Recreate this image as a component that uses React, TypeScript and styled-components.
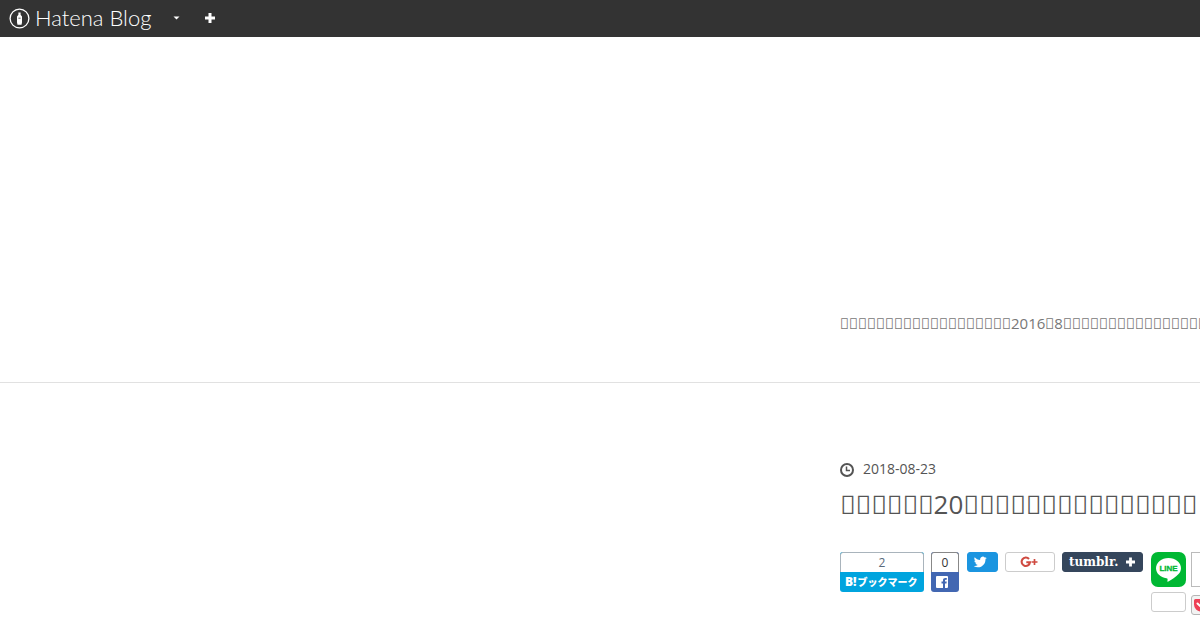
import React from "react";
import styled, { createGlobalStyle } from "styled-components";

const GlobalStyle = createGlobalStyle`
  * { box-sizing: border-box; }
  body {
    margin: 0;
    overflow-x: hidden;
    background: #fff;
    color: #545454;
    font-family: "Open Sans", "Noto Sans CJK JP", sans-serif;
  }
  a { color: inherit; text-decoration: none; }
`;

const Glyphs = styled.span`
  font-family: "Noto Sans", sans-serif;
`;

const Boxes = ({ count }: { count: number }) => <Glyphs>{"\uE123".repeat(count)}</Glyphs>;

const TopBar = styled.nav`
  display: flex;
  align-items: flex-start;
  height: 37px;
  padding-left: 9px;
  background: #333;
  color: #fff;
`;

const Brand = styled.a`
  display: flex;
  align-items: center;
  gap: 5px;
  width: 163px;
  font: 300 22px/36px Lato, sans-serif;
  white-space: nowrap;
`;

const BarButton = styled.button<{ $width: number }>`
  display: flex;
  align-items: center;
  width: ${(p) => p.$width}px;
  height: 36px;
  padding: 0;
  border: 0;
  background: none;
  color: #fff;
`;

const BlogHeader = styled.header`
  height: 346px;
  padding: 275px 0 0 70%;
  border-bottom: 1px solid #e1e1e1;
  overflow: hidden;
`;

const Description = styled.p`
  margin: 0;
  color: #777;
  font-size: 15px;
  line-height: 22px;
  white-space: nowrap;
`;

const Entry = styled.article`
  padding: 76px 0 0 70%;
  overflow: hidden;
`;

const EntryDate = styled.a`
  display: flex;
  align-items: center;
  gap: 9px;
  font-size: 14px;
  line-height: 20px;
  svg { margin-top: 2px; }
`;

const Title = styled.h1`
  margin: 7px 0 0;
  font-size: 26px;
  font-weight: 400;
  line-height: 36px;
  white-space: nowrap;
`;

const ShareRow = styled.div`
  display: flex;
  align-items: flex-start;
  gap: 8px;
  margin-top: 30px;
  padding-bottom: 15px;
`;

const ShareGroup = styled.div`
  display: flex;
  flex: none;
  gap: 7px;
`;

const Counter = styled.a<{ $width: number; $color: string }>`
  flex: none;
  width: ${(p) => p.$width}px;
  border-radius: 3px;
  overflow: hidden;
  background: ${(p) => p.$color};
  color: #fff;
`;

const Count = styled.span<{ $edge: string; $ink: string }>`
  display: block;
  height: 20px;
  border: 1px solid ${(p) => p.$edge};
  border-bottom: 0;
  border-radius: 3px 3px 0 0;
  background: #fff;
  color: ${(p) => p.$ink};
  font-size: 12px;
  line-height: 20px;
  text-align: center;
`;

const CounterLabel = styled.span`
  display: flex;
  align-items: center;
  gap: 1px;
  height: 20px;
  padding-left: 5px;
  font: 900 10px/20px "Noto Sans CJK JP", sans-serif;
  white-space: nowrap;

  b { font: 800 12px/20px "Open Sans", sans-serif; }
`;

const Pill = styled.a<{ $width: number; $color: string; $edge?: string }>`
  display: flex;
  flex: none;
  align-items: center;
  justify-content: center;
  width: ${(p) => p.$width}px;
  height: 20px;
  border: 1px solid ${(p) => p.$edge ?? p.$color};
  border-radius: 3px;
  background: ${(p) => p.$color};
  color: #fff;
`;

const TumblrName = styled.span`
  flex: 1;
  padding-left: 6px;
  font: 700 12px/18px "DejaVu Serif", serif;
  white-space: nowrap;
`;

const Stack = styled.div`
  display: flex;
  flex: none;
  flex-direction: column;
  gap: 5px;
`;

const ShareTail = styled.div`
  display: flex;
  gap: 5px;
`;

const LineButton = styled.a`
  display: block;
  height: 35px;
`;

const EmptyFrame = styled.div`
  width: 60px;
  height: 35px;
  border: 1px solid #bbb;
`;

const Pocket = styled.a`
  display: flex;
  align-items: center;
  width: 60px;
  height: 20px;
  margin-top: 3px;
  padding-left: 2px;
  border: 1px solid #b5b5b5;
  border-radius: 3px;
  background: #f3f3f3;
`;

export default function App() {
  return (
    <>
      <GlobalStyle />
      <TopBar>
        <Brand href="#">
          <svg width="21" height="21" viewBox="0 0 21 21" aria-hidden="true">
            <circle cx="10.5" cy="10.5" r="9.4" fill="none" stroke="#fff" strokeWidth="1.3" />
            <path d="M9.4 4.500h2.200v2.300L13 8.500v6l-.5 2.200H8.500L8 14.500v-6l1.400-1.700z" fill="#fff" />
            <path d="M9.400 10.200h2.200" stroke="#333" strokeWidth=".8" />
          </svg>
          Hatena Blog
        </Brand>
        <BarButton $width={33} aria-label="Menu">
          <svg width="8" height="6" viewBox="0 0 8 6"><path d="M1.500 1.500h6l-3 3z" fill="#fff" /></svg>
        </BarButton>
        <BarButton $width={12} aria-label="New post">
          <svg width="10" height="10" viewBox="0 0 10 10"><path d="M5 0v10M0 5h10" stroke="#fff" strokeWidth="3" /></svg>
        </BarButton>
      </TopBar>

      <BlogHeader>
        <Description><Boxes count={19} />2016<Boxes count={1} />8<Boxes count={16} /></Description>
      </BlogHeader>

      <Entry>
        <EntryDate href="#">
          <svg width="14" height="14" viewBox="0 0 14 14" aria-hidden="true">
            <circle cx="7" cy="7" r="6" fill="none" stroke="#545454" strokeWidth="2" />
            <path d="M6.500 3.500v4h3.500" fill="none" stroke="#545454" strokeWidth="1.500" />
          </svg>
          <time dateTime="2018-08-23">2018-08-23</time>
        </EntryDate>
        <Title><Boxes count={6} />20<Boxes count={15} /></Title>

        <ShareRow>
          <ShareGroup>
            <Counter href="#" $width={84} $color="#00a4de">
              <Count $edge="#a9b4bc" $ink="#5a6a7a">2</Count>
              <CounterLabel><b>B!</b>ブックマーク</CounterLabel>
            </Counter>
            <Counter href="#" $width={28} $color="#4267b2">
              <Count $edge="#888" $ink="#333">0</Count>
              <CounterLabel>
                <svg width="12" height="12" viewBox="0 0 12 12" role="img" aria-label="Facebook">
                  <path d="M1 0h10a1 1 0 0 1 1 1v10a1 1 0 0 1-1 1H9V7.500h1.500l.2-1.900H9V4.500c0-.5.200-.8.800-.8h1V2.100c-.3 0-.8-.1-1.400-.1C7.900 2 7 2.900 7 4.300v1.300H5.500v1.900H7V12H1a1 1 0 0 1-1-1V1a1 1 0 0 1 1-1z" fill="#fff" />
                </svg>
              </CounterLabel>
            </Counter>
          </ShareGroup>
          <ShareGroup>
            <Pill href="#" $width={31} $color="#1b95e0" aria-label="Tweet">
              <svg width="18" height="13" viewBox="2 1 30 24" aria-hidden="true">
                <path d="M23.950 4.570a10 10 0 0 1-2.820.770 4.960 4.960 0 0 0 2.160-2.720c-.95.550-2 .950-3.130 1.180a4.920 4.920 0 0 0-8.380 4.480C7.690 8.100 4.070 6.130 1.640 3.160a4.800 4.800 0 0 0-.67 2.480c0 1.700.870 3.210 2.190 4.100a4.900 4.900 0 0 1-2.230-.62v.060a4.920 4.920 0 0 0 3.950 4.830 5 5 0 0 1-2.210.080 4.940 4.940 0 0 0 4.600 3.420A9.870 9.870 0 0 1 0 19.540a13.990 13.990 0 0 0 7.550 2.210c9.050 0 14-7.500 14-13.980 0-.210 0-.420-.020-.630a9.940 9.940 0 0 0 2.420-2.570z" fill="#fff" style={{ transform: "none" }} />
              </svg>
            </Pill>
            <Pill href="#" $width={50} $color="#fff" $edge="#ccc">
              <svg width="20" height="12" viewBox="1 0 20 12" role="img" aria-label="Google Plus">
                <path d="M10 3A4.200 4.200 0 1 0 11 6.200H7.300" fill="none" stroke="#cf4a40" strokeWidth="2.100" />
                <path d="M15.500 3v6M12.500 6h6" stroke="#cf4a40" strokeWidth="1.700" />
              </svg>
            </Pill>
            <Pill href="#" $width={81} $color="#35465c">
              <TumblrName>tumblr.</TumblrName>
              <svg width="16" height="10" viewBox="0 0 16 10" aria-hidden="true"><path d="M4.500 .5v9M0 5h9" stroke="#fff" strokeWidth="2.800" /></svg>
            </Pill>
          </ShareGroup>
          <ShareTail>
            <Stack>
              <LineButton href="#">
                <svg width="35" height="35" viewBox="0 0 35 35" role="img" aria-label="LINE">
                  <rect width="35" height="35" rx="7" fill="#00b833" />
                  <path d="M17.500 6C10.500 6 5 10.600 5 16.200c0 5 4.400 9.200 10.400 10 1.500.3 1.300 1 1 2.900-.1.700.2.900.9.500 3.300-1.900 7.500-4.500 10-7.300 1.800-1.900 2.700-3.900 2.700-6.100C30 10.600 24.500 6 17.500 6z" fill="#fff" />
                  <text x="17.500" y="19" textAnchor="middle" fill="#00b833" stroke="#00b833" strokeWidth=".3" fontFamily="Liberation Sans, sans-serif" fontSize="8" fontWeight="700">LINE</text>
                </svg>
              </LineButton>
              <Pill href="#" $width={35} $color="#fff" $edge="#ccc" aria-label="Share" />
            </Stack>
            <Stack>
              <EmptyFrame />
              <Pocket href="#" aria-label="Pocket">
                <svg width="14" height="13" viewBox="0 0 14 13" aria-hidden="true">
                  <path d="M1.500 0h11A1.500 1.500 0 0 1 14 1.500V5.500a7 7 0 0 1-14 0V1.500A1.500 1.500 0 0 1 1.500 0z" fill="#ee4056" />
                  <path d="M3.500 4.500L7 7.800l3.500-3.300" fill="none" stroke="#fff" strokeWidth="2" strokeLinecap="round" />
                </svg>
              </Pocket>
            </Stack>
          </ShareTail>
        </ShareRow>
      </Entry>
    </>
  );
}
